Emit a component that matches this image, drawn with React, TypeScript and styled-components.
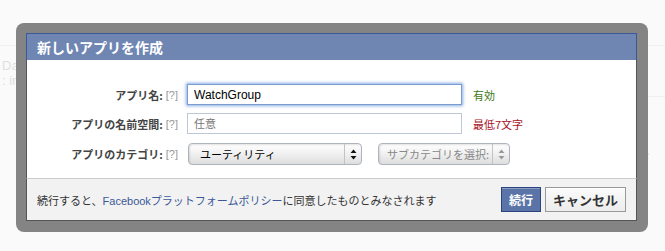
import React from 'react'
import styled, { createGlobalStyle } from 'styled-components'

const GlobalStyle = createGlobalStyle`
	html, body {
		margin: 0;
		padding: 0;
		background: #fafafa;
	}
	body {
		font-family: "Liberation Sans", "Noto Sans CJK JP", sans-serif;
		font-size: 11px;
		color: #333;
	}
`

const Page = styled.div`
	position: relative;
	width: 665px;
	height: 251px;
	overflow: hidden;
`

// faint page content that sits behind the modal
const BackPage = styled.div`
	display: flex;
	flex-direction: column;
	color: #e0e0e0;
	font-size: 13px;
`

const BackBar = styled.div`
	height: 45px;
	border-bottom: 1px solid #f0f0f0;
`

const BackRow = styled.div`
	display: flex;
	justify-content: space-between;
	padding: 12px 0 0 2px;
`

const BackSide = styled.div`
	display: flex;
	flex-direction: column;
`

const BackLine = styled.div`
	width: 40px;
	height: 38px;
	border-bottom: 1px solid #f0f0f0;
`

const BackText = styled.span<{ $top?: number }>`
	margin-top: ${(p) => p.$top ?? 0}px;
	font-family: "Noto Sans CJK JP", sans-serif;
`

const Overlay = styled.div`
	position: absolute;
	left: 16px;
	top: 23px;
	width: 612px;
	padding: 10px 10px 11px 10px;
	background: #848484;
	border-radius: 8px;
`

const Dialog = styled.div`
	display: flex;
	flex-direction: column;
	width: 611px;
	background: #fff;
`

const Header = styled.div`
	height: 26px;
	display: flex;
	align-items: center;
	padding-left: 10px;
	background: #6f86b3;
	border: 1px solid #3b5998;
	border-bottom: none;
	color: #fff;
	font-family: "Noto Sans CJK JP", sans-serif;
	font-weight: 700;
	font-size: 14px;
	line-height: 1;
`

const Body = styled.div`
	display: grid;
	grid-template-columns: 160px 275px 1fr;
	grid-auto-rows: auto;
	row-gap: 8px;
	align-items: center;
	padding: 24px 0 13px 0;
	border-left: 1px solid #555;
	border-right: 1px solid #555;
`

const Label = styled.label`
	display: flex;
	justify-content: flex-end;
	align-items: center;
	padding-right: 9px;
	font-family: "Noto Sans CJK JP", sans-serif;
	font-weight: 700;
	font-size: 11px;
	color: #444;
`

const Help = styled.span`
	margin-left: 3px;
	font-family: "Liberation Sans", sans-serif;
	font-weight: 400;
	font-size: 11px;
	color: #999;
`

const TextInput = styled.input<{ $focus?: boolean }>`
	box-sizing: border-box;
	width: 275px;
	height: 21px;
	margin: 0;
	padding: 0 6px;
	border: 1px solid ${(p) => (p.$focus ? '#7c9bd1' : '#bdc7d8')};
	box-shadow: ${(p) => (p.$focus ? '0 0 3px 1px rgba(96, 146, 220, 0.75)' : 'none')};
	outline: none;
	font-family: "Liberation Sans", "Noto Sans CJK JP", sans-serif;
	font-size: 12px;
	color: #000;
	&::placeholder {
		color: #777;
		font-family: "Noto Sans CJK JP", sans-serif;
		font-size: 11px;
	}
`

const Note = styled.span<{ $ok?: boolean }>`
	margin-left: 11px;
	font-family: "Noto Sans CJK JP", sans-serif;
	font-size: 11px;
	color: ${(p) => (p.$ok ? '#3e7b17' : '#a8142a')};
`

const SelectRow = styled.div`
	grid-column: 2 / 4;
	display: flex;
	gap: 16px;
	margin-top: 1px;
	padding-left: 1px;
`

const Select = styled.div<{ $width: number; $disabled?: boolean }>`
	box-sizing: border-box;
	display: flex;
	align-items: stretch;
	width: ${(p) => p.$width}px;
	height: 22px;
	border: 1px solid #aeb4bd;
	border-radius: 4px;
	background: linear-gradient(#ffffff, #f0f0f0 50%, #dedede);
	box-shadow: inset 1px 1px 2px rgba(0, 0, 0, 0.12);
	color: ${(p) => (p.$disabled ? '#888' : '#000')};
	font-family: "Noto Sans CJK JP", sans-serif;
	font-size: 11px;
`

const SelectText = styled.span<{ $pad: number }>`
	flex: 1;
	display: flex;
	align-items: center;
	padding-left: ${(p) => p.$pad}px;
	white-space: nowrap;
`

const SelectArrow = styled.span<{ $width: number }>`
	width: ${(p) => p.$width}px;
	flex: none;
	display: flex;
	align-items: center;
	justify-content: center;
	border-left: 1px solid #c3c3c3;
`

const Footer = styled.div`
	height: 41px;
	display: flex;
	align-items: center;
	justify-content: space-between;
	padding: 0 10px;
	background: #f2f2f2;
	border: 1px solid #555;
	border-top: 1px solid #cccccc;
	font-family: "Liberation Sans", "Noto Sans CJK JP", sans-serif;
	font-size: 11px;
	color: #333;
`

const Link = styled.a`
	color: #3b5998;
	text-decoration: none;
`

const Buttons = styled.div`
	display: flex;
	gap: 4px;
`

const Button = styled.button<{ $primary?: boolean }>`
	height: 25px;
	margin: 0;
	padding: 0 ${(p) => (p.$primary ? 7 : 7)}px;
	border: 1px solid ${(p) => (p.$primary ? '#29447e' : '#999')};
	background: ${(p) => (p.$primary ? '#5b74a8' : 'linear-gradient(#fbfbfb, #ececec)')};
	box-shadow: ${(p) =>
		p.$primary ? 'inset 0 1px 0 #8a9cc2' : 'inset 0 1px 0 #fff'};
	color: ${(p) => (p.$primary ? '#fff' : '#333')};
	font-family: "Noto Sans CJK JP", sans-serif;
	font-weight: 700;
	font-size: ${(p) => (p.$primary ? 12 : 13)}px;
	line-height: 1;
	cursor: pointer;
`

const Arrows = ({ color }: { color: string }) => (
	<svg width="7" height="11" viewBox="0 0 7 11">
		<path d="M3.5 0.5 L6.5 4 L0.5 4 Z" fill={color} />
		<path d="M3.5 10.5 L6.5 7 L0.5 7 Z" fill={color} />
	</svg>
)

export default function App() {
	return (
		<Page>
			<GlobalStyle />
			<BackPage>
				<BackBar />
				<BackRow>
					<BackSide>
						<span>Dashboard</span>
						<span>: intro</span>
					</BackSide>
					<BackSide>
						<BackLine />
						<BackText $top={50}>ズさ</BackText>
					</BackSide>
				</BackRow>
			</BackPage>

			<Overlay>
				<Dialog>
					<Header>新しいアプリを作成</Header>
					<Body>
						<Label>
							アプリ名:<Help>[?]</Help>
						</Label>
						<TextInput $focus defaultValue="WatchGroup" />
						<Note $ok>有効</Note>

						<Label>
							アプリの名前空間:<Help>[?]</Help>
						</Label>
						<TextInput placeholder="任意" />
						<Note>最低7文字</Note>

						<Label>
							アプリのカテゴリ:<Help>[?]</Help>
						</Label>
						<SelectRow>
							<Select $width={174}>
								<SelectText $pad={11}>ユーティリティ</SelectText>
								<SelectArrow $width={16}>
									<Arrows color="#111" />
								</SelectArrow>
							</Select>
							<Select $width={132} $disabled>
								<SelectText $pad={8}>サブカテゴリを選択:</SelectText>
								<SelectArrow $width={16}>
									<Arrows color="#999" />
								</SelectArrow>
							</Select>
						</SelectRow>
					</Body>
					<Footer>
						<span>
							続行すると、<Link href="#">Facebookプラットフォームポリシー</Link>
							に同意したものとみなされます
						</span>
						<Buttons>
							<Button $primary>続行</Button>
							<Button>キャンセル</Button>
						</Buttons>
					</Footer>
				</Dialog>
			</Overlay>
		</Page>
	)
}
